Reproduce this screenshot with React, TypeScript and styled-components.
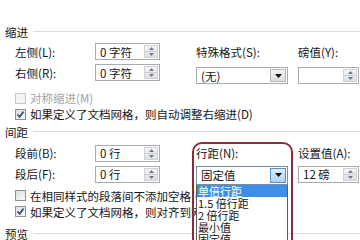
import React from "react";
import styled, { createGlobalStyle } from "styled-components";

const Global = createGlobalStyle`
  html, body { margin: 0; padding: 0; background: #fff; }
  body { font-family: "Noto Sans CJK SC", "Noto Sans", sans-serif; }
`;

const Page = styled.div`
  position: relative;
  width: 360px;
  height: 240px;
  overflow: hidden;
  box-sizing: border-box;
  padding: 26px 0 0 5px;
  background: #fff;
  color: #151515;
  font-size: 11.5px;
  line-height: 12px;
  display: flex;
  flex-direction: column;
`;

const SectionHeader = styled.div<{ $top: number }>`
  display: flex;
  align-items: center;
  gap: 5px;
  height: 12px;
  margin-top: ${(p) => p.$top}px;
  &::after {
    content: "";
    flex: 1;
    height: 1px;
    margin-top: -1px;
    background: #d9dee4;
  }
`;

const FieldGrid = styled.div<{ $top: number }>`
  display: grid;
  grid-template-columns: 80px 101px 102px 1fr;
  grid-template-rows: 17px 17px;
  row-gap: 4px;
  padding-left: 10px;
  margin-top: ${(p) => p.$top}px;
  align-items: center;
`;

const Label = styled.span<{ $col: number; $row: number }>`
  grid-column: ${(p) => p.$col};
  grid-row: ${(p) => p.$row};
  white-space: nowrap;
`;

const Cell = styled.div<{ $col: number; $row: number; $shift?: number }>`
  grid-column: ${(p) => p.$col};
  grid-row: ${(p) => p.$row};
  align-self: start;
  margin-top: ${(p) => p.$shift ?? 0}px;
  position: relative;
`;

const SpinField = styled.div<{ $w: number }>`
  display: flex;
  align-items: stretch;
  width: ${(p) => p.$w}px;
  height: 17px;
  box-sizing: border-box;
  border: 1px solid #a9abb0;
  background: #fff;
  padding: 1px;
`;

const Value = styled.span`
  flex: 1;
  display: flex;
  align-items: center;
  padding-left: 3px;
  line-height: 12px;
  white-space: nowrap;
`;

const Spinner = styled.span`
  width: 14px;
  display: flex;
  flex-direction: column;
  box-sizing: border-box;
  border: 1px solid #cfd1d4;
  background: linear-gradient(#f4f4f4, #dfe0e2);
`;

const SpinHalf = styled.span<{ $down?: boolean }>`
  flex: 1;
  display: flex;
  align-items: center;
  justify-content: center;
  border-top: ${(p) => (p.$down ? "1px solid #c9cbce" : "none")};
`;

const Select = styled.div<{ $active?: boolean; $h: number }>`
  display: flex;
  width: 92px;
  height: ${(p) => p.$h}px;
  box-sizing: border-box;
  border: 1px solid ${(p) => (p.$active ? "#7a8aa0" : "#a9abb0")};
  background: #fff;
  padding: 1px;
`;

const DropButton = styled.span<{ $active?: boolean }>`
  width: 16px;
  display: flex;
  align-items: center;
  justify-content: center;
  box-sizing: border-box;
  border: 1px solid ${(p) => (p.$active ? "#5f8fc0" : "#b5b7ba")};
  background: ${(p) =>
    p.$active
      ? "linear-gradient(#dff0fc, #a9d3f2)"
      : "linear-gradient(#f5f5f5, #d9dadc)"};
`;

const List = styled.div`
  position: absolute;
  left: 0;
  top: 100%;
  width: 92px;
  box-sizing: border-box;
  border: 1px solid #5c5c5c;
  border-top: none;
  background: #fff;
  z-index: 2;
`;

const ListItem = styled.div<{ $sel?: boolean }>`
  height: 12px;
  line-height: 12px;
  font-size: 11px;
  padding-left: 1px;
  white-space: nowrap;
  color: ${(p) => (p.$sel ? "#fff" : "#151515")};
  background: ${(p) => (p.$sel ? "#3d8ee6" : "transparent")};
`;

const CheckRow = styled.div<{ $top?: number; $disabled?: boolean }>`
  display: flex;
  align-items: center;
  gap: 4px;
  height: 18px;
  padding-left: 10px;
  margin-top: ${(p) => p.$top ?? 0}px;
  white-space: nowrap;
  color: ${(p) => (p.$disabled ? "#a2a2a2" : "#151515")};
`;

const Box = styled.span<{ $disabled?: boolean }>`
  flex: none;
  width: 11px;
  height: 11px;
  box-sizing: border-box;
  border: 1px solid ${(p) => (p.$disabled ? "#c9c9c9" : "#8e8f92")};
  background: ${(p) =>
    p.$disabled ? "#f3f3f3" : "linear-gradient(135deg, #dcdcdc, #fbfbfb)"};
  display: flex;
  align-items: center;
  justify-content: center;
`;

const Annotation = styled.div`
  position: absolute;
  left: 192px;
  top: 142px;
  width: 101px;
  height: 160px;
  box-sizing: border-box;
  border: 2px solid #8e2b3c;
  border-radius: 10px;
  z-index: 3;
  pointer-events: none;
`;

const UpArrow = () => (
  <svg width="5" height="3" viewBox="0 0 5 3">
    <path d="M0 3 L2.5 0 L5 3 Z" fill="#6a7890" />
  </svg>
);
const DownArrow = () => (
  <svg width="5" height="3" viewBox="0 0 5 3">
    <path d="M0 0 L2.5 3 L5 0 Z" fill="#6a7890" />
  </svg>
);
const Caret = () => (
  <svg width="7" height="4" viewBox="0 0 7 4">
    <path d="M0 0 L3.5 4 L7 0 Z" fill="#111" />
  </svg>
);
const Tick = () => (
  <svg width="9" height="9" viewBox="0 0 9 9">
    <path d="M1.5 4.5 L3.6 6.8 L7.6 1.6" stroke="#3b4f8c" strokeWidth="1.8" fill="none" />
  </svg>
);

const Spin = ({ value, w }: { value: string; w: number }) => (
  <SpinField $w={w}>
    <Value>{value}</Value>
    <Spinner>
      <SpinHalf>
        <UpArrow />
      </SpinHalf>
      <SpinHalf $down>
        <DownArrow />
      </SpinHalf>
    </Spinner>
  </SpinField>
);

const Check = ({
  label,
  checked,
  disabled,
  top,
}: {
  label: string;
  checked?: boolean;
  disabled?: boolean;
  top?: number;
}) => (
  <CheckRow $top={top} $disabled={disabled}>
    <Box $disabled={disabled}>{checked && <Tick />}</Box>
    <span>{label}</span>
  </CheckRow>
);

const options = ["单倍行距", "1.5 倍行距", "2 倍行距", "最小值", "固定值", "多倍行距"];

export default function App() {
  return (
    <>
      <Global />
      <Page>
        <SectionHeader $top={0}>缩进</SectionHeader>
        <FieldGrid $top={5}>
          <Label $col={1} $row={1}>左侧(L):</Label>
          <Cell $col={2} $row={1}>
            <Spin value="0 字符" w={65} />
          </Cell>
          <Label $col={3} $row={1}>特殊格式(S):</Label>
          <Label $col={4} $row={1}>磅值(Y):</Label>
          <Label $col={1} $row={2}>右侧(R):</Label>
          <Cell $col={2} $row={2}>
            <Spin value="0 字符" w={65} />
          </Cell>
          <Cell $col={3} $row={2} $shift={3}>
            <Select $h={17}>
              <Value>(无)</Value>
              <DropButton>
                <Caret />
              </DropButton>
            </Select>
          </Cell>
          <Cell $col={4} $row={2} $shift={3}>
            <Spin value="" w={61} />
          </Cell>
        </FieldGrid>
        <Check label="对称缩进(M)" disabled top={9} />
        <Check label="如果定义了文档网格，则自动调整右缩进(D)" checked />
        <SectionHeader $top={3}>间距</SectionHeader>
        <FieldGrid $top={7}>
          <Label $col={1} $row={1}>段前(B):</Label>
          <Cell $col={2} $row={1}>
            <Spin value="0 行" w={65} />
          </Cell>
          <Label $col={3} $row={1}>行距(N):</Label>
          <Label $col={4} $row={1}>设置值(A):</Label>
          <Label $col={1} $row={2}>段后(F):</Label>
          <Cell $col={2} $row={2}>
            <Spin value="0 行" w={65} />
          </Cell>
          <Cell $col={3} $row={2} $shift={0}>
            <Select $h={19} $active>
              <Value>固定值</Value>
              <DropButton $active>
                <Caret />
              </DropButton>
            </Select>
            <List>
              {options.map((o, i) => (
                <ListItem key={o} $sel={i === 0}>
                  {o}
                </ListItem>
              ))}
            </List>
          </Cell>
          <Cell $col={4} $row={2} $shift={0}>
            <Spin value="12 磅" w={61} />
          </Cell>
        </FieldGrid>
        <Check label="在相同样式的段落间不添加空格(C)" top={5} />
        <Check label="如果定义了文档网格，则对齐到网格(W)" checked />
        <SectionHeader $top={8}>预览</SectionHeader>
        <Annotation />
      </Page>
    </>
  );
}
